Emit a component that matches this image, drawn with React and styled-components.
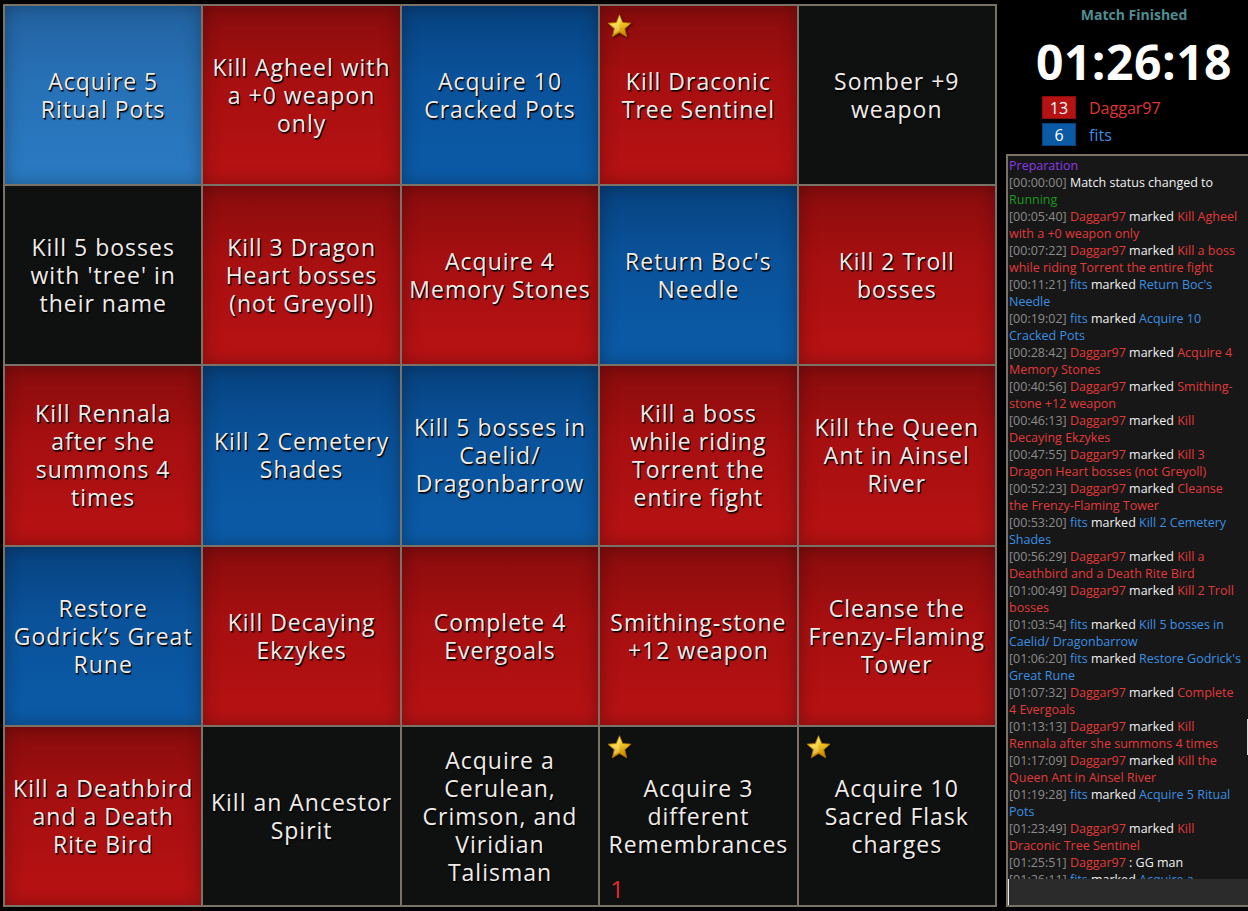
import React from 'react';
import styled, { createGlobalStyle, css } from 'styled-components';

const GlobalStyle = createGlobalStyle`
    html, body {
        margin: 0;
        padding: 0;
        background: #000;
    }
    * {
        box-sizing: border-box;
    }
`;

const Page = styled.div`
    display: flex;
    align-items: flex-start;
    width: 1248px;
    height: 911px;
    padding: 4px 0 0 3px;
    background: #000;
    overflow: hidden;
`;

const Board = styled.div`
    display: grid;
    grid-template-columns: repeat(5, 1fr);
    grid-template-rows: repeat(5, 1fr);
    gap: 2px;
    padding: 2px;
    width: 994px;
    height: 903px;
    flex-shrink: 0;
    background: #7a7266;
`;

const tones = {
    red: css`
        background: linear-gradient(to bottom, #880c0d 0%, #a60f10 40%, #b81213 100%);
        box-shadow: inset 0 0 18px rgba(0, 0, 0, 0.3);
    `,
    blue: css`
        background: linear-gradient(to bottom, #07427f 0%, #0a529a 40%, #0b5ba8 100%);
        box-shadow: inset 0 0 18px rgba(0, 0, 0, 0.3);
    `,
    sky: css`
        background: linear-gradient(to bottom, #2262a0 0%, #2770b5 40%, #2a7bc4 100%);
        box-shadow: inset 0 0 18px rgba(0, 0, 0, 0.3);
    `,
    black: css`
        background: #0f1111;
    `,
};

const Cell = styled.div`
    position: relative;
    display: flex;
    align-items: center;
    justify-content: center;
    padding: 0 4px;
    text-align: center;
    white-space: nowrap;
    font-family: 'Open Sans', sans-serif;
    font-size: 23px;
    letter-spacing: 1px;
    line-height: 28px;
    color: #f1ece8;
    text-shadow: 1px 1px 0 #000, 1px 2px 1px rgba(0, 0, 0, 0.6);
    ${(p) => tones[p.$tone]}
`;

const Star = styled.svg`
    position: absolute;
    top: 7px;
    left: 6px;
    width: 27px;
    height: 27px;
    filter: drop-shadow(1px 1px 1px rgba(0, 0, 0, 0.6));
`;

const Count = styled.span`
    position: absolute;
    left: 10px;
    bottom: 2px;
    font-family: 'Open Sans', sans-serif;
    font-size: 24px;
    letter-spacing: 0;
    color: #e22a30;
    text-shadow: none;
`;

const Sidebar = styled.div`
    display: flex;
    flex-direction: column;
    flex-shrink: 0;
    width: 256px;
    height: 903px;
    margin-left: 9px;
    font-family: 'Open Sans', sans-serif;
`;

const Status = styled.div`
    margin-top: 1px;
    text-align: center;
    font-size: 14px;
    font-weight: bold;
    line-height: 20px;
    color: #4f8e92;
`;

const Timer = styled.div`
    margin-top: 9px;
    text-align: center;
    font-size: 48px;
    font-weight: bold;
    line-height: 56px;
    color: #fff;
    letter-spacing: 0.5px;
`;

const Scores = styled.div`
    display: flex;
    flex-direction: column;
    gap: 4px;
    margin-top: 6px;
    padding-left: 36px;
`;

const ScoreRow = styled.div`
    display: flex;
    align-items: center;
    gap: 13px;
    height: 23px;
`;

const ScoreBox = styled.span`
    display: flex;
    align-items: center;
    justify-content: center;
    width: 34px;
    height: 23px;
    font-size: 16px;
    color: #fff;
    background: ${(p) => (p.$team === 'red' ? '#b51213' : '#0b5aa6')};
    border: 1px solid ${(p) => (p.$team === 'red' ? '#8a0d0e' : '#07407a')};
`;

const ScoreName = styled.span`
    font-size: 16px;
    color: ${(p) => (p.$team === 'red' ? '#e03535' : '#3a8ee0')};
`;

const ChatBox = styled.div`
    display: flex;
    flex-direction: column;
    margin-top: 8px;
    flex: 1;
    min-height: 0;
    border: 2px solid #7a7266;
    background: #171717;
`;

const ChatBody = styled.div`
    display: flex;
    flex: 1;
    min-height: 0;
`;

const Log = styled.div`
    width: 235px;
    padding: 1px 0 0 1px;
    overflow: hidden;
    font-size: 12.5px;
    line-height: 17px;
    color: #f2f2f2;
`;

const Scrollbar = styled.div`
    position: relative;
    flex: 1;
    background: #171717;
`;

const Thumb = styled.div`
    position: absolute;
    top: 563px;
    left: 4px;
    width: 2px;
    height: 36px;
    background: #d8d8d8;
`;

const Entry = styled.div``;

const Stamp = styled.span`
    color: #8c8c8c;
`;

const Name = styled.span`
    color: ${(p) => (p.$team === 'red' ? '#e03a3a' : '#3b8fe2')};
`;

const Goal = styled.span`
    color: ${(p) => (p.$team === 'red' ? '#e03a3a' : '#3b8fe2')};
`;

const Phase = styled.span`
    color: ${(p) => p.$color};
`;

const ChatInput = styled.div`
    height: 26px;
    background: #2b2b2b;
    border-left: 1px solid #e8e8e8;
`;

const StarIcon = ({ id }) => (
    <Star viewBox="0 0 24 24">
        <defs>
            <linearGradient id={id} x1="0" y1="0" x2="0.3" y2="1">
                <stop offset="0" stopColor="#fff7b0" />
                <stop offset="0.45" stopColor="#f7cf2a" />
                <stop offset="1" stopColor="#c98a00" />
            </linearGradient>
        </defs>
        <polygon
            points="12,1.5 14.9,8.4 22.3,9 16.7,13.9 18.4,21.2 12,17.3 5.6,21.2 7.3,13.9 1.7,9 9.1,8.4"
            fill={`url(#${id})`}
            stroke="#a86e00"
            strokeWidth="0.8"
            strokeLinejoin="round"
        />
        <polygon points="12,4 12,15.5 6.6,18.6 8.2,13.4 4.5,10 9.8,9.6" fill="#fff6c4" opacity="0.35" />
    </Star>
);

const cells = [
    { tone: 'sky', lines: ['Acquire 5', 'Ritual Pots'] },
    { tone: 'red', lines: ['Kill Agheel with', 'a +0 weapon', 'only'] },
    { tone: 'blue', lines: ['Acquire 10', 'Cracked Pots'] },
    { tone: 'red', lines: ['Kill Draconic', 'Tree Sentinel'], star: true },
    { tone: 'black', lines: ['Somber +9', 'weapon'] },
    { tone: 'black', lines: ['Kill 5 bosses', "with 'tree' in", 'their name'] },
    { tone: 'red', lines: ['Kill 3 Dragon', 'Heart bosses', '(not Greyoll)'] },
    { tone: 'red', lines: ['Acquire 4', 'Memory Stones'] },
    { tone: 'blue', lines: ["Return Boc's", 'Needle'] },
    { tone: 'red', lines: ['Kill 2 Troll', 'bosses'] },
    { tone: 'red', lines: ['Kill Rennala', 'after she', 'summons 4', 'times'] },
    { tone: 'blue', lines: ['Kill 2 Cemetery', 'Shades'] },
    { tone: 'blue', lines: ['Kill 5 bosses in', 'Caelid/', 'Dragonbarrow'] },
    { tone: 'red', lines: ['Kill a boss', 'while riding', 'Torrent the', 'entire fight'] },
    { tone: 'red', lines: ['Kill the Queen', 'Ant in Ainsel', 'River'] },
    { tone: 'blue', lines: ['Restore', 'Godrick’s Great', 'Rune'] },
    { tone: 'red', lines: ['Kill Decaying', 'Ekzykes'] },
    { tone: 'red', lines: ['Complete 4', 'Evergoals'] },
    { tone: 'red', lines: ['Smithing‑stone', '+12 weapon'] },
    { tone: 'red', lines: ['Cleanse the', 'Frenzy‑Flaming', 'Tower'] },
    { tone: 'red', lines: ['Kill a Deathbird', 'and a Death', 'Rite Bird'] },
    { tone: 'black', lines: ['Kill an Ancestor', 'Spirit'] },
    { tone: 'black', lines: ['Acquire a', 'Cerulean,', 'Crimson, and', 'Viridian', 'Talisman'] },
    { tone: 'black', lines: ['Acquire 3', 'different', 'Remembrances'], star: true, count: 1 },
    { tone: 'black', lines: ['Acquire 10', 'Sacred Flask', 'charges'], star: true },
];

const D = 'red';
const F = 'blue';

const log = [
    ['00:05:40', D, 'Kill Agheel with a +0 weapon only'],
    ['00:07:22', D, 'Kill a boss while riding Torrent the entire fight'],
    ['00:11:21', F, "Return Boc's Needle"],
    ['00:19:02', F, 'Acquire 10 Cracked Pots'],
    ['00:28:42', D, 'Acquire 4 Memory Stones'],
    ['00:40:56', D, 'Smithing-stone +12 weapon'],
    ['00:46:13', D, 'Kill Decaying Ekzykes'],
    ['00:47:55', D, 'Kill 3 Dragon Heart bosses (not Greyoll)'],
    ['00:52:23', D, 'Cleanse the Frenzy-Flaming Tower'],
    ['00:53:20', F, 'Kill 2 Cemetery Shades'],
    ['00:56:29', D, 'Kill a Deathbird and a Death Rite Bird'],
    ['01:00:49', D, 'Kill 2 Troll bosses'],
    ['01:03:54', F, 'Kill 5 bosses in Caelid/ Dragonbarrow'],
    ['01:06:20', F, "Restore Godrick's Great Rune"],
    ['01:07:32', D, 'Complete 4 Evergoals'],
    ['01:13:13', D, 'Kill Rennala after she summons 4 times'],
    ['01:17:09', D, 'Kill the Queen Ant in Ainsel River'],
    ['01:19:28', F, 'Acquire 5 Ritual Pots'],
    ['01:23:49', D, 'Kill Draconic Tree Sentinel'],
];

const names = { red: 'Daggar97', blue: 'fits' };

const App = () => {
    return (
        <>
            <GlobalStyle />
            <Page>
                <Board>
                    {cells.map((c, i) => (
                        <Cell key={i} $tone={c.tone}>
                            {c.star && <StarIcon id={`star-${i}`} />}
                            <span>
                                {c.lines.map((l, j) => (
                                    <React.Fragment key={j}>
                                        {j > 0 && <br />}
                                        {l}
                                    </React.Fragment>
                                ))}
                            </span>
                            {c.count && <Count>{c.count}</Count>}
                        </Cell>
                    ))}
                </Board>
                <Sidebar>
                    <Status>Match Finished</Status>
                    <Timer>01:26:18</Timer>
                    <Scores>
                        <ScoreRow>
                            <ScoreBox $team="red">13</ScoreBox>
                            <ScoreName $team="red">Daggar97</ScoreName>
                        </ScoreRow>
                        <ScoreRow>
                            <ScoreBox $team="blue">6</ScoreBox>
                            <ScoreName $team="blue">fits</ScoreName>
                        </ScoreRow>
                    </Scores>
                    <ChatBox>
                        <ChatBody>
                            <Log>
                                <Entry><Phase $color="#8a3be6">Preparation</Phase></Entry>
                                <Entry>
                                    <Stamp>[00:00:00]</Stamp> Match status changed to <Phase $color="#1d9a1d">Running</Phase>
                                </Entry>
                                {log.map(([t, team, goal]) => (
                                    <Entry key={t}>
                                        <Stamp>[{t}]</Stamp> <Name $team={team}>{names[team]}</Name> marked <Goal $team={team}>{goal}</Goal>
                                    </Entry>
                                ))}
                                <Entry>
                                    <Stamp>[01:25:51]</Stamp> <Name $team="red">Daggar97</Name> : GG man
                                </Entry>
                                <Entry>
                                    <Stamp>[01:26:11]</Stamp> <Name $team="blue">fits</Name> marked <Goal $team="blue">Acquire a Cerulean, Crimson, and Viridian Talisman</Goal>
                                </Entry>
                            </Log>
                            <Scrollbar>
                                <Thumb />
                            </Scrollbar>
                        </ChatBody>
                        <ChatInput />
                    </ChatBox>
                </Sidebar>
            </Page>
        </>
    );
};

export default App;
